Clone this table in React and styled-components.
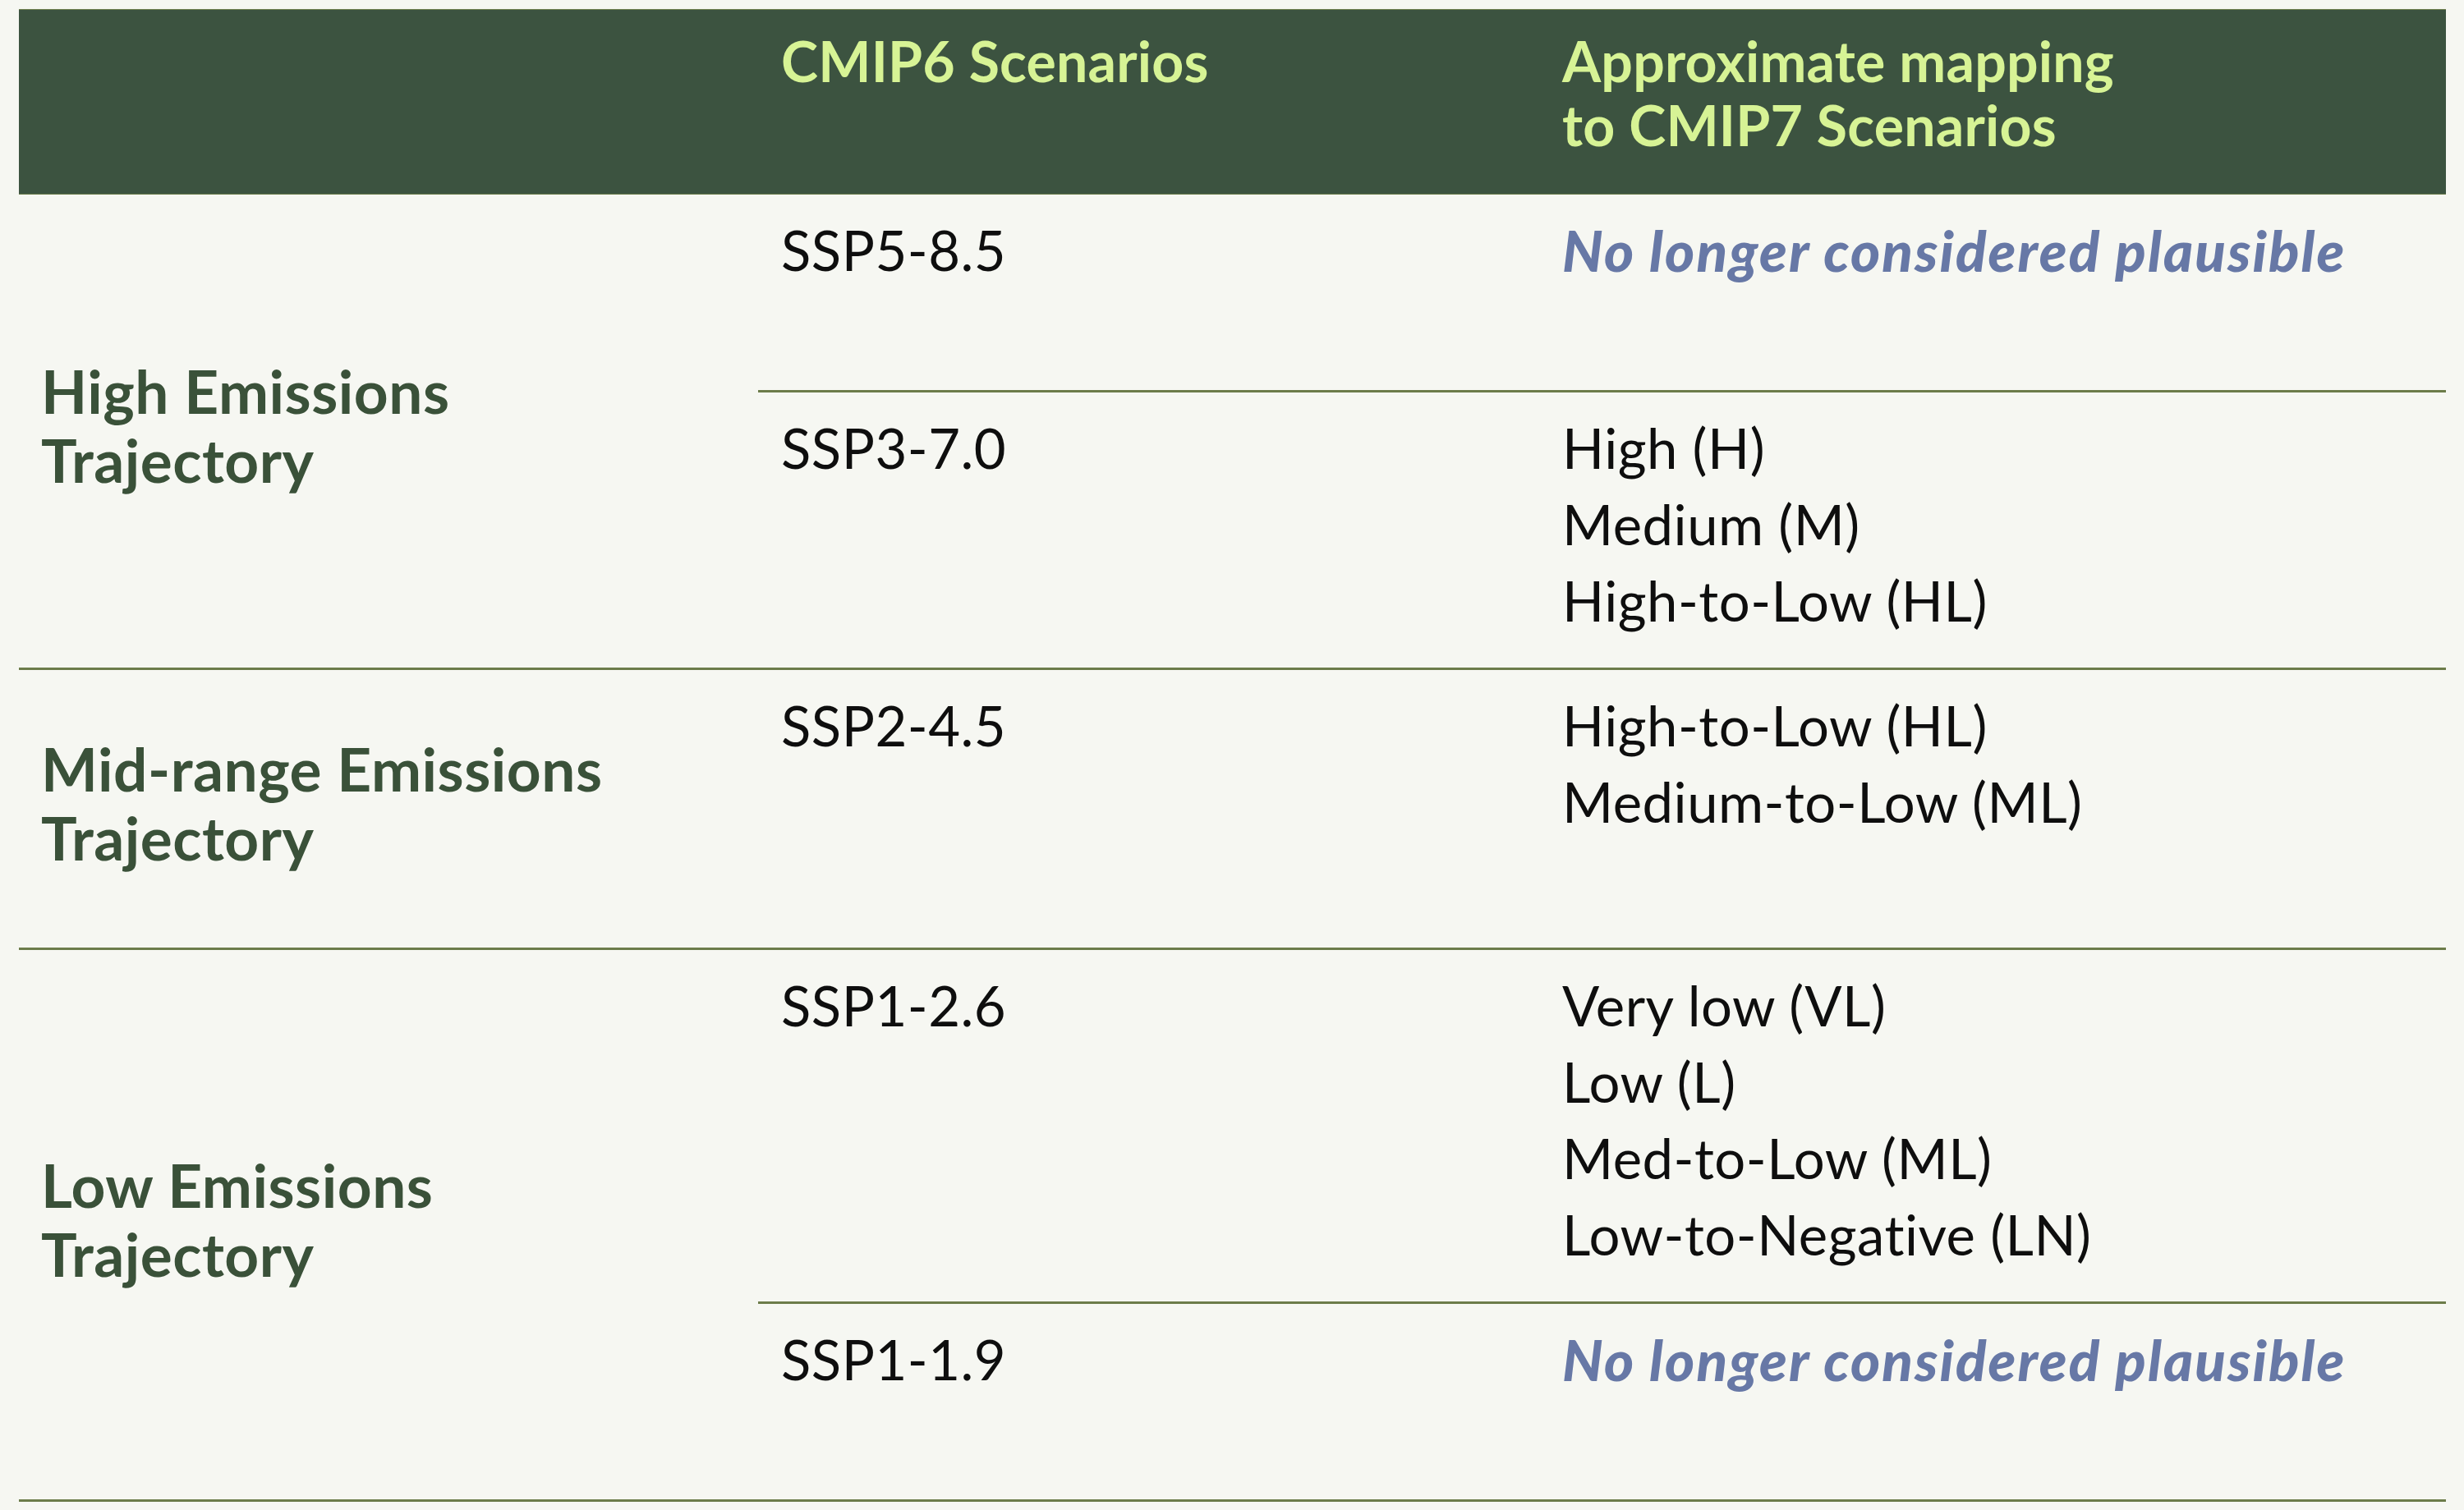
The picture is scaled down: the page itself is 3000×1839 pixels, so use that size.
import React from "react";
import styled, { createGlobalStyle } from "styled-components";

const GlobalStyle = createGlobalStyle`
  * { box-sizing: border-box; }
  html, body { margin: 0; padding: 0; background: #f6f7f2; }
  body { font-family: "Lato", "Noto Sans", sans-serif; }
`;

const Page = styled.div`
  padding: 11px 22px 12px 23px;
  background: #f6f7f2;
`;

const Table = styled.div`
  display: flex;
  flex-direction: column;
  width: 100%;
`;

const HeaderRow = styled.div`
  display: grid;
  grid-template-columns: 900px 951px 1fr;
  height: 226px;
  background: #3c5340;
  border-top: 1px solid #6f8050;
  border-bottom: 1px solid #6f8050;
`;

const HeadCell = styled.div`
  padding: 23px 28px 0 28px;
  font-size: 68px;
  font-weight: 700;
  line-height: 77.5px;
  letter-spacing: 0.2px;
  color: #d7f395;
`;

const Group = styled.div`
  display: grid;
  grid-template-columns: 900px 1fr;
  border-bottom: 3px solid #6c7c4a;
`;

const Label = styled.div`
  display: flex;
  align-items: center;
  padding: 21px 27px 35px 27px;
  font-size: 73px;
  font-weight: 700;
  line-height: 84px;
  letter-spacing: 0.5px;
  color: #3a5139;
`;

const SubRows = styled.div`
  display: flex;
  flex-direction: column;
`;

const SubRow = styled.div`
  display: grid;
  grid-template-columns: 951px 1fr;
  min-height: ${(p) => (p.$minHeight ? `${p.$minHeight}px` : "0")};
  border-bottom: ${(p) => (p.$last ? "none" : "3px solid #6c7c4a")};
`;

const Cell = styled.div`
  padding: 21px 28px 35px 28px;
  font-size: 67px;
  font-weight: 400;
  line-height: 93px;
  letter-spacing: 0.5px;
  color: #0e0e0e;
`;

const Line = styled.div`
  white-space: nowrap;
`;

const Implausible = styled.div`
  font-size: 69px;
  font-weight: 900;
  font-style: italic;
  letter-spacing: 2.15px;
  color: #6778a6;
  white-space: nowrap;
`;

const groups = [
  {
    label: ["High Emissions", "Trajectory"],
    rows: [
      { ssp: "SSP5-8.5", implausible: true, minHeight: 241 },
      { ssp: "SSP3-7.0", items: ["High (H)", "Medium (M)", "High-to-Low (HL)"] },
    ],
  },
  {
    label: ["Mid-range Emissions", "Trajectory"],
    rows: [
      { ssp: "SSP2-4.5", items: ["High-to-Low (HL)", "Medium-to-Low (ML)"], minHeight: 338 },
    ],
  },
  {
    label: ["Low Emissions", "Trajectory"],
    rows: [
      {
        ssp: "SSP1-2.6",
        items: ["Very low (VL)", "Low (L)", "Med-to-Low (ML)", "Low-to-Negative (LN)"],
      },
      { ssp: "SSP1-1.9", implausible: true, minHeight: 238 },
    ],
  },
];

export default function App() {
  return (
    <>
      <GlobalStyle />
      <Page>
        <Table>
          <HeaderRow>
            <HeadCell />
            <HeadCell>CMIP6 Scenarios</HeadCell>
            <HeadCell>
              Approximate mapping
              <br />
              to CMIP7 Scenarios
            </HeadCell>
          </HeaderRow>
          {groups.map((g) => (
            <Group key={g.label[0]}>
              <Label>
                <div>
                  {g.label[0]}
                  <br />
                  {g.label[1]}
                </div>
              </Label>
              <SubRows>
                {g.rows.map((r, i) => (
                  <SubRow
                    key={r.ssp}
                    $minHeight={r.minHeight}
                    $last={i === g.rows.length - 1}
                  >
                    <Cell>{r.ssp}</Cell>
                    <Cell>
                      {r.implausible ? (
                        <Implausible>No longer considered plausible</Implausible>
                      ) : (
                        r.items.map((t) => <Line key={t}>{t}</Line>)
                      )}
                    </Cell>
                  </SubRow>
                ))}
              </SubRows>
            </Group>
          ))}
        </Table>
      </Page>
    </>
  );
}
